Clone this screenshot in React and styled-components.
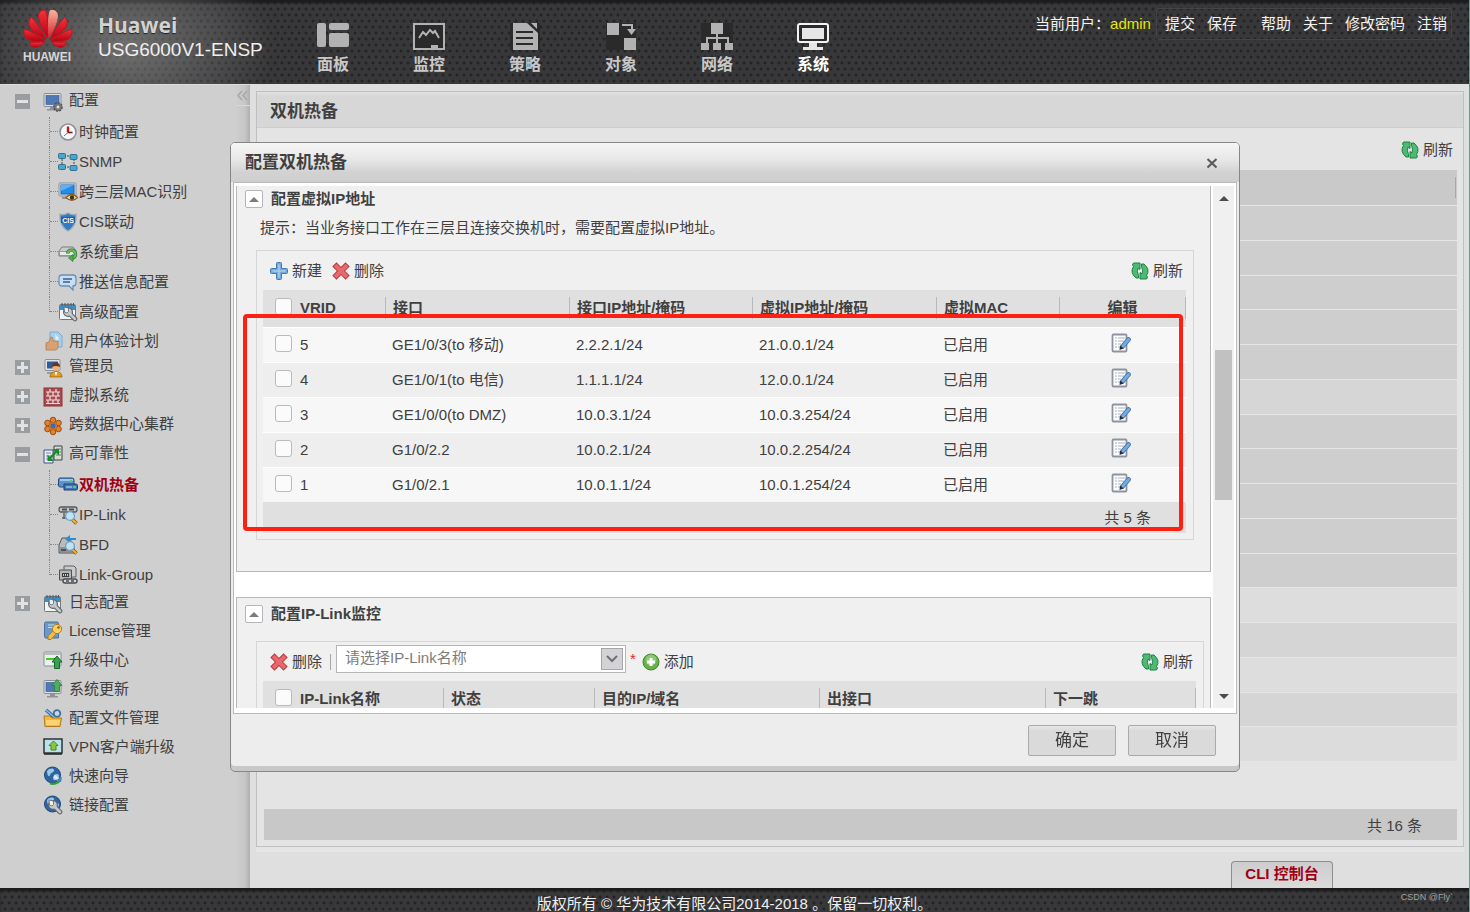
import React from "react";
import styled, { createGlobalStyle, css } from "styled-components";

const GlobalStyle = createGlobalStyle`
  *, *::before, *::after { box-sizing: border-box; }
  body {
    margin: 0;
    color: #404040;
    font: 15px/20px "Liberation Sans", "Noto Sans CJK SC", sans-serif;
  }
  button, select, input { font: inherit; color: inherit; }
  h1, h2, h3, p, ul { margin: 0; padding: 0; }
  ul { list-style: none; }
`;

const mesh = css`
  background-color: #38383a;
  background-image: radial-gradient(circle at 2px 3px, #242425 1px, transparent 2px),
    radial-gradient(circle at 5px 9px, #242425 1px, transparent 2px);
  background-size: 7px 12px;
`;

const Page = styled.div`
  display: flex;
  flex-direction: column;
  min-height: 100vh;
  border-right: 1px solid #25b3b5;
  background: #dfdfdf;
`;

/* ---------- header ---------- */

const Header = styled.header`
  ${mesh}
  display: flex;
  height: 84px;
  box-shadow: inset 0 3px 2px #1c1c1d, inset 0 -1px 0 #4a3032;
`;

const Brand = styled.div`
  display: flex;
  flex: none;
  width: 285px;
  padding: 9px 0 0 23px;
  gap: 25px;
  color: #efefef;
  background: radial-gradient(ellipse 150px 100px at 125px 46px, rgba(150, 150, 150, 0.6), transparent);
`;

const LogoBlock = styled.div`
  width: 50px;
  color: #d6d6d6;
  font-size: 12px;
  font-weight: bold;
  line-height: 16px;
  svg { display: block; }
`;

const BrandName = styled.div`
  font: bold 21px/24px "Open Sans", sans-serif;
  color: #d2d2d2;
  text-shadow: 0 1px 1px #222;
  padding-top: 4px;
`;

const Model = styled.div`
  font-size: 19px;
  line-height: 26px;
`;

const MainNav = styled.nav`
  display: flex;
  flex: 1;
`;

const NavLink = styled.a`
  display: flex;
  flex-direction: column;
  align-items: center;
  width: 96px;
  padding-top: 23px;
  gap: 4px;
  color: ${(p) => (p.$active ? "#ffffff" : "#c8c8c8")};
  font-size: 16px;
  font-weight: bold;
  line-height: 22px;
  text-decoration: none;
`;

const Account = styled.div`
  display: flex;
  align-items: flex-start;
  gap: 5px;
  padding: 8px 17px 0 0;
  color: #f2f2f2;
  line-height: 32px;
`;

const UserName = styled.span`
  color: #e6e600;
`;

const AccountLinks = styled.div`
  display: flex;
  gap: 12px;
  padding: 0 4px 0 8px;
  border: 1px solid #444446;
  border-radius: 3px;
  line-height: 30px;
`;

const AccountLink = styled.a`
  color: inherit;
  text-decoration: none;
  margin-left: ${(p) => (p.$apart ? "12px" : 0)};
`;

/* ---------- sidebar ---------- */

const Body = styled.div`
  display: flex;
  flex: 1;
`;

const Sidebar = styled.aside`
  display: flex;
  flex: none;
  width: 250px;
  border-top: 1px solid #dcdcdc;
  background: linear-gradient(to right, #cfcfcf 235px, #c6c6c6 245px, #afafaf);
`;

const Tree = styled.ul`
  flex: 1;
  padding-top: 2px;
`;

const TreeItem = styled.li`
  margin-top: ${(p) => (p.$tight ? "-2px" : 0)};
`;

const TreeRow = styled.div`
  display: flex;
  align-items: center;
  height: 29px;
  padding-left: 15px;
`;

const TreeLink = styled.a`
  display: flex;
  align-items: center;
  gap: ${(p) => (p.$child ? "1px" : "6px")};
  color: ${(p) => (p.$current ? "#a00014" : "#404040")};
  font-weight: ${(p) => (p.$current ? "bold" : "normal")};
  text-decoration: none;
  white-space: nowrap;
  svg { flex: none; }
`;

const TreeLabel = styled.span`
  padding-bottom: ${(p) => (p.$raised ? "4px" : 0)};
`;

const Toggle = styled.button`
  display: grid;
  place-items: center;
  width: 15px;
  height: 15px;
  margin-right: 13px;
  padding: 0;
  border: 0;
  background: #9a9da0;
`;

const ToggleSpace = styled.span`
  width: 28px;
`;

const ChildList = styled.ul`
  margin: 1px 0 -1px;
  padding-left: 49px;
`;

const Child = styled.li`
  display: flex;
  height: 30px;
`;

const Branch = styled.span`
  width: 9px;
  border-left: 1px dotted #858585;
  height: ${(p) => (p.$last ? "15px" : "30px")};
  &::before {
    content: "";
    display: block;
    height: 15px;
    border-bottom: 1px dotted #858585;
  }
`;

const Collapse = styled.button`
  flex: none;
  width: 14px;
  height: 21px;
  padding: 0;
  border: 0;
  border-bottom: 1px solid #d8d8d8;
  background: transparent;
  svg { display: block; }
`;

/* ---------- main panel ---------- */

const Main = styled.main`
  display: flex;
  flex: 1;
  flex-direction: column;
  padding: 7px 5px 0 6px;
`;

const PanelShell = styled.div`
  display: flex;
  flex: 1;
  padding-bottom: 5px;
  background: #e5e5e5;
`;

const Panel = styled.section`
  display: flex;
  flex: 1;
  flex-direction: column;
  border: 1px solid #bfbfbf;
  background: #e4e4e4;
`;

const PanelTitle = styled.h1`
  height: 36px;
  padding-left: 13px;
  border-bottom: 1px solid #cdcdcd;
  background: linear-gradient(#e2e2e2, #d7d7d7 4px);
  font-size: 17px;
  line-height: 40px;
`;

const PanelBody = styled.div`
  display: flex;
  flex: 1;
  flex-direction: column;
  padding: 0 6px 6px 7px;
`;

const PanelTools = styled.div`
  display: flex;
  justify-content: flex-end;
  align-items: center;
  height: 42px;
  padding: 2px 4px 0 0;
`;

const BackTable = styled.table`
  width: 100%;
  height: 591px;
  border-collapse: separate;
  border-spacing: 0;
`;

const BackHead = styled.th`
  height: 35px;
  padding: 7px 1px;
  background: #c9c9c9;
  div {
    height: 21px;
    border-right: 1px solid #a8a8a8;
  }
`;

const BackCell = styled.td`
  height: 34px;
  padding: 0;
  border-top: 1px solid #e6e6e6;
  background: ${(p) => p.$tone};
`;

const PanelCount = styled.div`
  margin-top: auto;
  padding-right: 35px;
  background: #c8c8c8;
  line-height: 34px;
  height: 31px;
  text-align: right;
`;

const ConsoleRow = styled.div`
  display: flex;
  justify-content: flex-end;
  padding: 9px 131px 0 0;
`;

const ConsoleTab = styled.button`
  width: 102px;
  height: 27px;
  padding: 0 0 2px;
  border: 1px solid #8e8e8e;
  border-bottom: 0;
  border-radius: 4px 4px 0 0;
  background: linear-gradient(#cdcdcd, #dadada);
  color: #a00014;
  font-weight: bold;
`;

const Footer = styled.footer`
  ${mesh}
  position: relative;
  height: 24px;
  padding-top: 4px;
  box-shadow: inset 0 3px 2px #1c1c1d;
  color: #f0f0f0;
  text-align: center;
  line-height: 24px;
  overflow: hidden;
`;

const Credit = styled.span`
  position: absolute;
  top: 0;
  right: 16px;
  color: #a2a2a2;
  font-size: 9px;
  line-height: 18px;
`;

/* ---------- dialog ---------- */

const Overlay = styled.div`
  position: fixed;
  inset: 0;
  display: grid;
  place-items: center;
  padding-top: 2px;
`;

const Dialog = styled.section`
  display: flex;
  flex-direction: column;
  width: min(1010px, 94vw);
  height: min(630px, 94vh);
  border: 1px solid #868686;
  border-radius: 5px;
  background: #ededed;
  box-shadow: inset 0 -5px 0 #c8c8c8;
  overflow: hidden;
`;

const DialogHead = styled.header`
  display: flex;
  flex: none;
  justify-content: space-between;
  align-items: center;
  height: 39px;
  padding: 0 19px 0 14px;
  background: linear-gradient(#f6f6f6, #e6e6e6 45%, #d2d2d2 75%, #cecece);
`;

const DialogTitle = styled.h2`
  font-size: 17px;
`;

const CloseButton = styled.button`
  width: 16px;
  height: 16px;
  padding: 0;
  border: 0;
  background: transparent;
  svg { display: block; }
`;

const Frame = styled.div`
  display: flex;
  flex: 1;
  min-height: 0;
  gap: 2px;
  margin: 0 2px;
  padding: 3px 2px 5px;
  border: 1px solid #b9b9bb;
  background: #ffffff;
`;

const Pane = styled.div`
  flex: 1;
  overflow: hidden;
`;

const ScrollTrack = styled.div`
  display: flex;
  flex: none;
  flex-direction: column;
  align-items: center;
  justify-content: space-between;
  width: 21px;
  background: #f0f0f0;
`;

const ScrollButton = styled.button`
  width: 21px;
  height: 23px;
  padding: 0;
  border: 0;
  background: transparent;
  svg { display: block; margin: 0 auto; }
`;

const ScrollThumb = styled.div`
  width: 17px;
  height: 150px;
  margin-bottom: 44px;
  background: #c1c1c1;
`;

const Section = styled.section`
  padding: ${(p) => (p.$clipped ? "4px 16px 31px 19px" : "7px 6px 31px 19px")};
  margin-bottom: 25px;
  border: 1px solid #b8b8bc;
  border-top-width: ${(p) => (p.$clipped ? 0 : "1px")};
  background: #f0f0f0;
`;

const SectionHead = styled.div`
  display: flex;
  align-items: center;
  gap: 8px;
  height: 18px;
  margin-left: -11px;
`;

const SectionToggle = styled.button`
  display: grid;
  place-items: center;
  width: 18px;
  height: 18px;
  padding: 0;
  border: 1px solid #b4b6bc;
  border-radius: 2px;
  background: #ffffff;
`;

const SectionTitle = styled.h3`
  font-size: 15px;
`;

const Hint = styled.p`
  margin-top: 10px;
  padding-left: 4px;
`;

const GridBox = styled.div`
  position: relative;
  margin-top: ${(p) => (p.$far ? "18px" : "12px")};
  padding: 0 7px 6px 6px;
  border: 1px solid #d6d6d6;
`;

const Toolbar = styled.div`
  display: flex;
  align-items: center;
  height: 39px;
  padding: 0 3px 0 7px;
  gap: ${(p) => (p.$dense ? "8px" : "10px")};
`;

const ToolButton = styled.button`
  display: flex;
  align-items: center;
  gap: 4px;
  padding: 0;
  border: 0;
  background: transparent;
  margin-left: ${(p) => (p.$end ? "auto" : 0)};
`;

const ToolDivider = styled.span`
  width: 1px;
  height: 16px;
  background: #a8a8a8;
`;

const SelectWrap = styled.div`
  display: grid;
  grid-template-columns: 1fr 25px;
  align-items: center;
  width: 290px;
  height: 28px;
  margin: 0 -4px 6px -3px;
`;

const Select = styled.select`
  grid-area: 1 / 1 / 2 / 3;
  height: 28px;
  padding: 0 30px 2px 8px;
  border: 1px solid #b5b5b9;
  border-radius: 0;
  background: #ffffff;
  color: #7c7c7c;
  appearance: none;
`;

const SelectArrow = styled.span`
  grid-area: 1 / 2 / 2 / 3;
  display: grid;
  place-items: center;
  width: 22px;
  height: 22px;
  border: 1px solid #a5a5ad;
  background: #d3d3d6;
  pointer-events: none;
`;

const Required = styled.span`
  color: #f02020;
  margin: 0 -2px 6px 0;
`;

const DataTable = styled.table`
  width: 100%;
  table-layout: fixed;
  border-collapse: separate;
  border-spacing: 0;
`;

const Col = styled.col`
  width: ${(p) => (p.$w ? p.$w + "px" : "auto")};
`;

const HeadCell = styled.th`
  height: 37px;
  padding: 7px 0 8px;
  background: #e0e0e0;
  text-align: ${(p) => (p.$center ? "center" : "left")};
  white-space: nowrap;
`;

const HeadLabel = styled.div`
  height: 22px;
  padding-left: ${(p) => (p.$flush ? 0 : "7px")};
  border-right: 1px solid #b9b9b9;
  line-height: 22px;
`;

const Row = styled.tr`
  height: 35px;
  background: ${(p) => (p.$odd ? "#eeeeee" : "#f7f7f7")};
`;

const Cell = styled.td`
  padding: 0 0 0 ${(p) => (p.$flush ? "0" : "6px")};
  border-top: 1px solid #ffffff;
  text-align: ${(p) => (p.$center ? "center" : "left")};
`;

const Check = styled.input`
  display: block;
  width: 17px;
  height: 17px;
  margin: 0 0 3px 12px;
  border: 1px solid #b8bac0;
  border-radius: 3px;
  background: #fbfbfb;
  appearance: none;
`;

const EditButton = styled.button`
  width: 20px;
  height: 20px;
  margin: 0 4px 4px 0;
  padding: 0;
  border: 0;
  background: transparent;
  vertical-align: middle;
  svg { display: block; }
`;

const CountCell = styled.td`
  height: 31px;
  padding: 0 35px 0 0;
  background: #e0e0e0;
  text-align: right;
`;

const Highlight = styled.div`
  position: absolute;
  inset: 63px 10px 8px -14px;
  border: 4px solid #ff2012;
  border-radius: 4px;
  pointer-events: none;
`;

const DialogFoot = styled.footer`
  display: flex;
  flex: none;
  justify-content: flex-end;
  gap: 12px;
  height: 57px;
  padding: 11px 23px 0 0;
`;

const DialogButton = styled.button`
  width: 88px;
  height: 31px;
  padding: 0;
  border: 1px solid #a9aaae;
  border-radius: 2px;
  background: linear-gradient(#e6e6e6, #dadada 5px);
  font-size: 17px;
`;

/* ---------- drawings ---------- */

const Petals = () => (
  <g>
    <path d="M24.2 29C24.8 20 25 8 22.8 1.8C19.5.3 15.5 2.5 15.5 6.8C15.5 13 20.5 22.5 24.2 29z" />
    <path d="M22.6 30.5C19 22 13.5 13 8.5 8.5C5.2 11 5.2 15 7.3 18.8C10.5 23.5 17.5 27.5 22.6 30.5z" />
    <path d="M21.8 32C16 27.5 8.5 22 1.5 20C0 24.5 1.8 29 6 30.8C10.5 32.7 17 32.3 21.8 32z" />
    <path d="M21.5 33.3C16 33 10.5 33 6.3 34C8 37.5 11 39 14 38.2C17 37.2 19.5 35.3 21.5 33.3z" />
  </g>
);

const HuaweiLogo = () => (
  <svg width="50" height="40" viewBox="0 0 50 40" aria-hidden="true">
    <defs>
      <linearGradient id="petal" x1="0" y1="0" x2="0" y2="1">
        <stop offset="0" stopColor="#f0333b" />
        <stop offset="1" stopColor="#b8000f" />
      </linearGradient>
      <linearGradient id="shine" x1="0" y1="0" x2="0" y2="1">
        <stop offset="0" stopColor="#f3b3a0" />
        <stop offset="1" stopColor="#d8202a" />
      </linearGradient>
    </defs>
    <g fill="url(#petal)" stroke="#c4101c" strokeWidth=".9"><Petals /></g>
    <g fill="url(#petal)" stroke="#c4101c" strokeWidth=".9" transform="translate(50 0) scale(-1 1)"><Petals /></g>
    <path fill="url(#shine)" stroke="url(#shine)" d="M25.8 29C25.2 20 25 8 27.2 1.8C30.5.3 34.5 2.5 34.5 6.8C34.5 13 29.5 22.5 25.8 29z" />
  </svg>
);

const navDrawings = {
  dashboard: (
    <g fill="#b2b2b2">
      <rect width="9" height="24" rx="2" /><rect x="12" width="20" height="7" rx="2" /><rect x="12" y="10" width="20" height="14" rx="2" />
    </g>
  ),
  monitor: (
    <>
      <rect x="1" y="1" width="30" height="25" fill="#2a2a2b" stroke="#b2b2b2" strokeWidth="2" />
      <path d="M6 15L10 9L13 12L17 7L20 10L22 8L26 15" fill="none" stroke="#b2b2b2" strokeWidth="2" />
      <path d="M18 22h7v3h-7z" fill="#b2b2b2" />
    </>
  ),
  policy: (
    <>
      <path d="M1 0h30v27H1z" fill="#2a2a2b" />
      <path d="M4 0h14l11 10v17H4z" fill="#b2b2b2" /><path d="M22 0h6v6z" fill="#b2b2b2" />
      <path d="M7 9h17M7 15h17M7 21h17" stroke="#2a2a2b" strokeWidth="2" />
    </>
  ),
  object: (
    <>
      <path d="M1 0h30v27H1z" fill="#2a2a2b" />
      <path d="M2 0h12v12H2zM19 15h12v12H19z" fill="#b2b2b2" />
      <path d="M17 2h10v6" fill="none" stroke="#b2b2b2" strokeWidth="2" /><path d="M22 6h9l-4.500 6z" fill="#b2b2b2" />
    </>
  ),
  network: (
    <>
      <path d="M0 0h32v27H0z" fill="#2a2a2b" />
      <path d="M10 0h12v11H10zM0 20h8v7H0zM12 20h8v7h-8zM24 20h8v7h-8z" fill="#b2b2b2" />
      <path d="M16 11v9M6 20v-5h21v5" fill="none" stroke="#b2b2b2" strokeWidth="2" />
    </>
  ),
  system: (
    <>
      <rect x="1" y="1" width="30" height="18" rx="2" fill="#2a2a2b" stroke="#f2f2f2" strokeWidth="2" />
      <path d="M5 5h22v11H5zM12 20h8v4h6v3H6v-3h6z" fill="#e6e6e6" />
    </>
  ),
};

const NavIcon = ({ name }) => (
  <svg width="32" height="27" viewBox="0 0 32 27" aria-hidden="true">{navDrawings[name]}</svg>
);

const screen = (
  <>
    <rect x="1" y="1.500" width="17" height="13" rx="1" fill="#d9dde2" stroke="#8b9097" />
    <rect x="3" y="3.500" width="13" height="9" fill="#4f78b5" stroke="#3a5c92" strokeWidth=".6" />
    <path d="M7 15h5v2h3v1.500H4V17h3z" fill="#8f9399" />
  </>
);
const wrench = (
  <>
    <path d="M11 11L17 17" stroke="#5f6469" strokeWidth="4.600" strokeLinecap="round" />
    <circle cx="10" cy="10" r="4.400" fill="#c3c8cc" stroke="#5f6469" strokeWidth="1.200" />
    <path d="M11 11L17 17" stroke="#c3c8cc" strokeWidth="2.600" strokeLinecap="round" />
    <path d="M6 5l4.500 1v3.500L9 11 6.500 10z" fill="#eef1f3" stroke="#5f6469" strokeWidth=".8" />
  </>
);
const calendar = (
  <>
    <rect x="1.500" y="2.500" width="16" height="15" rx="1" fill="#f2f5f7" stroke="#71777c" />
    <path d="M2 3h15v5H2z" fill="#3d8fca" />
    <path d="M4 1v3M7 1v3M10 1v3M13 1v3M15.500 1v3" stroke="#4f565c" />
    {wrench}
  </>
);
const lens = (
  <>
    <path d="M14 14l4.500 4.500" stroke="#7a5a10" strokeWidth="3.600" /><path d="M14 14l4.200 4.200" stroke="#f0b429" strokeWidth="2.200" />
    <circle cx="12" cy="11" r="4.400" fill="#bfe2f7" stroke="#6da0c4" strokeWidth="1.200" />
  </>
);
const greenUp = (
  <path d="M14 6l5 6h-2.500v6.500h-5V12H9z" fill="#35a34b" stroke="#146b2a" />
);
const globe = (
  <>
    <circle cx="9.500" cy="9" r="8" fill="#2f64a0" stroke="#204a7c" />
    <path d="M4 5c3-3 6-3 7-1s-3 2-4 5-3 0-3-4zM11 9c3-2 5-1 5 1s-3 5-5 4 0-3 0-5z" fill="#9cc7e8" />
  </>
);

const treeDrawings = {
  config: (
    <>
      {screen}
      <circle cx="15" cy="15" r="4" fill="#777" stroke="#4c4c4c" strokeWidth="1.600" strokeDasharray="2 1" />
      <circle cx="15" cy="15" r="3.400" fill="#777" /><circle cx="15" cy="15" r="1.500" fill="#e0e0e0" />
    </>
  ),
  clock: (
    <>
      <circle cx="10" cy="10" r="8" fill="#f5f7f9" stroke="#8a9299" strokeWidth="1.600" />
      <path d="M10 4.500v6" stroke="#c01818" strokeWidth="2.400" /><path d="M10 10.500h4.500" stroke="#7c1515" strokeWidth="1.600" /><path d="M6 14l4-3.500" stroke="#777" />
    </>
  ),
  snmp: (
    <>
      <path d="M6 4h8M6 15h8M4 4v12M16 4v12" stroke="#444" strokeDasharray="2 1" />
      <g fill="#49a8d2" stroke="#1e607f" strokeWidth=".8">
        <rect x="0.500" y="1.500" width="7" height="5" rx="1" /><rect x="12" y="2.500" width="7" height="5" rx="1" />
        <rect x="0.500" y="12.500" width="7" height="5" rx="1" /><rect x="12" y="13.500" width="7" height="5" rx="1" />
      </g>
    </>
  ),
  mac: (
    <>
      <rect x="1" y="1" width="17" height="13" rx="1" fill="#d9dde2" stroke="#8b9097" />
      <rect x="3" y="3" width="13" height="9" fill="#268be6" stroke="#1664b5" /><path d="M3 3h13l-13 6z" fill="#58b2f7" />
      <path d="M4 15h8v2H4z" fill="#8f9399" />
      <path d="M8 15.500q6-6 11.500 0q-5.500 5.500-11.500 0z" fill="#f5e6c4" stroke="#8a5a16" strokeWidth="1.300" /><circle cx="14" cy="15.500" r="2.200" fill="#43301a" />
    </>
  ),
  cis: (
    <>
      <path d="M10 1c3 2 6 2 8 1.500C18.500 11 15 16 10 19C5 16 1.500 11 2 2.500C4 3 7 3 10 1z" fill="#2d7cc4" stroke="#9ba6b0" strokeWidth="1.400" />
      <path d="M3 5h14v6H3z" fill="#1d62a6" />
      <text x="10" y="10.500" textAnchor="middle" fontSize="7" fontWeight="bold" fill="#fff" fontFamily="Liberation Sans, sans-serif">CIS</text>
    </>
  ),
  reboot: (
    <>
      <path d="M4 5h11l3 4v5H1V9z" fill="#c9cccf" stroke="#777d82" /><path d="M1.500 9.500h16v4h-16z" fill="#e7e9ea" stroke="#858a8e" strokeWidth=".8" />
      <path d="M9.500 11.500a4 4 0 1 1 5 4.500" fill="none" stroke="#2d7c2a" strokeWidth="3.400" /><path d="M9.500 11.500a4 4 0 1 1 5 4.500" fill="none" stroke="#6cba5c" strokeWidth="2" />
      <path d="M15 12.500v7l-4.500-3.500z" fill="#58ad4b" stroke="#2d7c2a" strokeWidth=".7" />
    </>
  ),
  message: (
    <>
      <path d="M4 3h11q3 0 3 3v5q0 3-3 3v4l-4-4H4q-3 0-3-3V6q0-3 3-3z" fill="#c4dff5" stroke="#6e8fae" strokeWidth="1.300" />
      <path d="M5 7h9M5 10h7" stroke="#3f5f86" strokeWidth="1.400" />
    </>
  ),
  calendar,
  thumb: (
    <>
      <path d="M7 1h8l4 4v11H7z" fill="#a9cfee" stroke="#7da9cf" /><path d="M12 3l4 4-3 5z" fill="#d9edfb" />
      <path d="M3 12l3-1 2-5q2 0 2 2v2h5q1 1 0 2v5q-1 2-3 2H3z" fill="#d8a173" stroke="#b57a49" strokeWidth=".8" />
    </>
  ),
  admin: (
    <>
      <rect x="2" y="1.500" width="15" height="11" rx="1" fill="#e2e4e6" stroke="#8b9097" /><rect x="4" y="3.500" width="11" height="7" fill="#2c5c9a" />
      <path d="M4 14h6v2H4z" fill="#9a9ea2" />
      <circle cx="13" cy="9.500" r="3.600" fill="#efb27c" /><path d="M9 9q0-4.500 4-4.500T17 9q-4-2-8 0z" fill="#6b3712" />
      <path d="M7 19q0-5 6-5.500q6 .5 6 5.500z" fill="#e79b1e" stroke="#8f5c0a" strokeWidth=".7" /><path d="M11.500 14h3L13 18z" fill="#fff" />
    </>
  ),
  wall: (
    <>
      <rect x="1" y="1" width="18" height="18" fill="#a84b4e" stroke="#8c3438" />
      <path d="M3 5h14M3 9h14M3 13h14M3 16.500h14M7 2v3M13 2v3M5 5v4M10 5v4M15 5v4M7 9v4M13 9v4M5 13v4M10 13v4M15 13v4" stroke="#f0dede" strokeWidth="1.200" />
    </>
  ),
  cluster: (
    <>
      <g fill="#e5812a" stroke="#8e4410" strokeWidth=".9">
        <circle cx="10" cy="4" r="2.800" /><circle cx="10" cy="16" r="2.800" /><circle cx="4.500" cy="7" r="2.800" /><circle cx="15.500" cy="7" r="2.800" /><circle cx="4.500" cy="13" r="2.800" /><circle cx="15.500" cy="13" r="2.800" />
      </g>
      <circle cx="10" cy="10" r="3.800" fill="#d07122" /><circle cx="10" cy="10" r="2.400" fill="#2a6fc9" />
    </>
  ),
  reliability: (
    <>
      <path d="M1 5h9v13H1z" fill="#e9edf5" stroke="#4a4f8a" /><path d="M3 8h5M3 11h5M3 14h5" stroke="#8085b0" />
      <path d="M11 1h8v14h-8z" fill="#d5dbd7" stroke="#3d4440" /><path d="M13 4h5M13 7h5M13 10h5" stroke="#6d7771" />
      <path d="M6 14l8-8" fill="none" stroke="#1d8a2b" strokeWidth="2.400" /><path d="M9.500 4H16v6.500zM4.500 9.500V16H11z" fill="#1d8a2b" />
    </>
  ),
  standby: (
    <>
      <path d="M2 3h12q2 0 2 2v5q0 2-2 2H2q-1.500 0-1.500-2V5q0-2 1.500-2z" fill="#5b93cd" stroke="#24497e" /><path d="M2 5h13" stroke="#b9d8f3" strokeWidth="1.500" />
      <path d="M6 9h12q1.500 0 1.500 1.500v3q0 1.500-1.500 1.500H6z" fill="#3f77b8" stroke="#1f3f70" /><path d="M8 12h6" stroke="#cfe4f7" /><path d="M12 6h2M15 12h3" stroke="#54d646" strokeWidth="2" />
    </>
  ),
  iplink: (
    <>
      <path d="M3 2h14q2 0 2 2.500T17 7H3Q1 7 1 4.500T3 2z" fill="#c4c6c8" stroke="#55595c" strokeWidth="1.300" /><path d="M4 4.500h5M11 4.500h5" stroke="#4d5154" strokeWidth="2" /><path d="M6 8v6M4 13h5" stroke="#666" strokeWidth="1.500" />
      {lens}
    </>
  ),
  bfd: (
    <>
      <path d="M4 3h7l5 7v8H1v-8z" fill="#b9bcbe" stroke="#52575a" /><path d="M2 12h12v5H2z" fill="#8d9194" /><path d="M3 15h5" stroke="#3b3f41" strokeWidth="1.500" />
      <path d="M18 5h-6V8L7 4l5-4v3h6z" fill="#2d8bd0" />{lens}
    </>
  ),
  linkgroup: (
    <>
      <path d="M6 1h10l2 2v9H6z" fill="#c9cbcd" stroke="#5a5e61" /><path d="M1.500 5h12v10h-12z" fill="#b2b5b7" stroke="#4d5154" /><path d="M4 8h7v4H4z" fill="#3b3f41" /><path d="M5 10h5" stroke="#e8cf4c" strokeWidth="2" strokeDasharray="1 1" />
      <path d="M7 14h10q2 0 2 2t-2 2H7q-2 0-2-2t2-2z" fill="#d8d9da" stroke="#484c4f" strokeWidth="1.400" /><path d="M8 16h3M13 16h3" stroke="#484c4f" strokeWidth="1.400" />
    </>
  ),
  license: (
    <>
      <path d="M3 1h11q1.500 0 1.500 1.500V17H3q-1.500 0-1.500-1.500v-13Q1.500 1 3 1z" fill="#6d98c6" stroke="#4a719c" /><path d="M5 4h8M5 6.500h6" stroke="#c4dbf0" />
      <path d="M10.500 9.500L5 15v3.500h3l5-5.500" fill="#f3bd45" stroke="#b37c14" /><circle cx="14" cy="8" r="4.600" fill="#f9cf66" stroke="#b37c14" /><circle cx="15.500" cy="6.500" r="1.300" fill="#8d6417" />
    </>
  ),
  upgrade: (
    <>
      <rect x="1" y="2" width="17" height="14" rx="1" fill="#eef0f0" stroke="#888d8f" /><path d="M1 2.500h17v2.500H1z" fill="#b8bdbf" /><path d="M3 9h8" stroke="#3bd321" strokeWidth="2" /><path d="M11 9h5" stroke="#333" strokeWidth="2" />{greenUp}
    </>
  ),
  update: (
    <>
      {screen}
      <path d="M14 0.500l5 6h-2.500v6h-5v-6H9z" fill="#4fae5c" stroke="#2b7d3a" strokeWidth=".8" />
    </>
  ),
  files: (
    <>
      <path d="M3 2l8 7" stroke="#2e6aa8" strokeWidth="3.400" /><path d="M3 2l8 7" stroke="#8cbbe4" strokeWidth="1.500" /><circle cx="14" cy="5.500" r="3.300" fill="#c5d6e6" stroke="#446e97" strokeWidth="1.800" />
      <path d="M1 8h6l2 2h9.500L17 18.500H2z" fill="#f4b83c" stroke="#b67c12" /><path d="M3 12h14l-1 5H3z" fill="#fbd375" />
    </>
  ),
  vpn: (
    <>
      <rect x="1" y="2" width="18" height="14" fill="#b9e3ea" stroke="#2d3436" strokeWidth="1.500" /><path d="M1 17h18" stroke="#222" strokeWidth="1.500" />
      <path d="M10.500 4l4.500 4.500h-2V13H8V8.500H6z" fill="#8cc63e" stroke="#4c8616" />
    </>
  ),
  wizard: (
    <>
      {globe}
      <path d="M11 10l5 4" stroke="#dce8f2" strokeWidth="3" /><path d="M7 17.500q7 1.500 10-3" fill="none" stroke="#2da12d" strokeWidth="2" /><path d="M13 14l6-3-1 5z" fill="#3f7fc0" />
    </>
  ),
  link: (<>{globe}{wrench}</>),
};

const TreeIcon = ({ name }) => (
  <svg width="20" height="20" viewBox="0 0 20 20" aria-hidden="true">{treeDrawings[name]}</svg>
);

const RefreshIcon = () => (
  <svg width="18" height="18" viewBox="0 0 18 18" aria-hidden="true">
    <g fill="#4dbb73" stroke="#1d8045" strokeLinejoin="round">
      <path d="M2.500 1H9v6.500L7 6Q5.500 9.500 7.500 13.500V16H5Q-1.500 10.500 2.500 4.500L1.500 3z" />
      <path d="M15.500 17H9v-6.500l2 1.500Q12.500 8.500 10.500 4.500V2H13Q19.500 7.500 15.500 13.500l1 1.500z" />
    </g>
  </svg>
);

const PlusIcon = () => (
  <svg width="18" height="18" viewBox="0 0 18 18" aria-hidden="true">
    <path d="M6.500 1.500q0-1 1-1h3q1 0 1 1v5h5q1 0 1 1v3q0 1-1 1h-5v5q0 1-1 1h-3q-1 0-1-1v-5h-5q-1 0-1-1v-3q0-1 1-1h5z" fill="#77aadb" stroke="#4379b3" />
    <path d="M9 2.500v13M2.500 9h13" stroke="#a9cdec" strokeWidth="1.500" />
  </svg>
);

const DeleteIcon = () => (
  <svg width="18" height="18" viewBox="0 0 18 18" aria-hidden="true">
    <path d="M4.500 4.500l9 9M13.500 4.500l-9 9" stroke="#b73a3f" strokeWidth="6" strokeLinecap="square" />
    <path d="M4.500 4.500l9 9M13.500 4.500l-9 9" stroke="#e8696b" strokeWidth="4" strokeLinecap="square" />
  </svg>
);

const AddIcon = () => (
  <svg width="18" height="18" viewBox="0 0 18 18" aria-hidden="true">
    <circle cx="9" cy="9" r="8" fill="#69b04b" stroke="#458a2d" /><circle cx="9" cy="7" r="5.500" fill="#8cc972" />
    <path d="M9 5v8M5 9h8" stroke="#fff" strokeWidth="3" />
  </svg>
);

const EditIcon = () => (
  <svg width="20" height="20" viewBox="0 0 20 20" aria-hidden="true">
    <rect x="1.500" y="1.500" width="14" height="17" rx="1" fill="#fdfdfd" stroke="#8d94a0" strokeWidth="1.800" />
    <path d="M4 5h2M7 5h7M4 8h2M7 8h6M4 11h2M7 11h3M4 14h2M7 14h2" stroke="#a9b2bf" />
    <path d="M17.500 6.500L11.500 13.500" stroke="#3e6fa8" strokeWidth="4.600" strokeLinecap="round" />
    <path d="M17.500 6.500L12 13" stroke="#77aadd" strokeWidth="3" strokeLinecap="round" />
    <path d="M9 12.500l3.500 3-4 1.500z" fill="#262b33" />
  </svg>
);

const Triangle = ({ down, color }) => (
  <svg width="10" height="6" viewBox="0 0 10 6" aria-hidden="true">
    <path d={down ? "M0 0h10L5 5z" : "M0 6h10L5 1z"} fill={color} />
  </svg>
);

/* ---------- data ---------- */

const navItems = [
  ["dashboard", "面板"], ["monitor", "监控"], ["policy", "策略"],
  ["object", "对象"], ["network", "网络"], ["system", "系统"],
];

const tree = [
  {
    icon: "config", label: "配置", kind: "open",
    children: [
      ["clock", "时钟配置"], ["snmp", "SNMP"], ["mac", "跨三层MAC识别"], ["cis", "CIS联动"],
      ["reboot", "系统重启"], ["message", "推送信息配置"], ["calendar", "高级配置"],
    ],
  },
  { icon: "thumb", label: "用户体验计划" },
  { icon: "admin", label: "管理员", kind: "closed", tight: true },
  { icon: "wall", label: "虚拟系统", kind: "closed" },
  { icon: "cluster", label: "跨数据中心集群", kind: "closed" },
  {
    icon: "reliability", label: "高可靠性", kind: "open",
    children: [["standby", "双机热备"], ["iplink", "IP-Link"], ["bfd", "BFD"], ["linkgroup", "Link-Group"]],
  },
  { icon: "calendar", label: "日志配置", kind: "closed" },
  { icon: "license", label: "License管理", tight: true },
  { icon: "upgrade", label: "升级中心" },
  { icon: "update", label: "系统更新" },
  { icon: "files", label: "配置文件管理" },
  { icon: "vpn", label: "VPN客户端升级" },
  { icon: "wizard", label: "快速向导" },
  { icon: "link", label: "链接配置" },
];

const current = "双机热备";

const rows = [
  ["5", "GE1/0/3(to 移动)", "2.2.2.1/24", "21.0.0.1/24"],
  ["4", "GE1/0/1(to 电信)", "1.1.1.1/24", "12.0.0.1/24"],
  ["3", "GE1/0/0(to DMZ)", "10.0.3.1/24", "10.0.3.254/24"],
  ["2", "G1/0/2.2", "10.0.2.1/24", "10.0.2.254/24"],
  ["1", "G1/0/2.1", "10.0.1.1/24", "10.0.1.254/24"],
];

const tones = [
  "#cecece", "#cecece", "#cecece", "#cecece", "#cecece", "#d6d6d6", "#cecece", "#cecece",
  "#cecece", "#cecece", "#cecece", "#dddddd", "#d5d5d5", "#dddddd", "#d5d5d5", "#dcdcdc",
];

/* ---------- parts ---------- */

const SideTree = () => (
  <Tree>
    {tree.map((item) => (
      <TreeItem key={item.label} $tight={item.tight}>
        <TreeRow>
          {item.kind ? (
            <Toggle aria-label={item.label}>
              <svg width="11" height="11" aria-hidden="true">
                <path d={item.kind === "open" ? "M0 5.500h11" : "M0 5.500h11M5.500 0v11"} stroke="#e2e2e2" strokeWidth="3" />
              </svg>
            </Toggle>
          ) : <ToggleSpace />}
          <TreeLink href="#">
            <TreeIcon name={item.icon} />
            <TreeLabel $raised={!!item.kind}>{item.label}</TreeLabel>
          </TreeLink>
        </TreeRow>
        {item.children && (
          <ChildList>
            {item.children.map(([icon, label], i) => (
              <Child key={label}>
                <Branch $last={i === item.children.length - 1} />
                <TreeLink href="#" $child $current={label === current}>
                  <TreeIcon name={icon} />
                  <TreeLabel>{label}</TreeLabel>
                </TreeLink>
              </Child>
            ))}
          </ChildList>
        )}
      </TreeItem>
    ))}
  </Tree>
);

const Refresh = () => (
  <ToolButton $end><RefreshIcon />刷新</ToolButton>
);

const VirtualIpSection = () => (
  <Section $clipped>
    <SectionHead>
      <SectionToggle aria-label="配置虚拟IP地址"><Triangle color="#7b7b7b" /></SectionToggle>
      <SectionTitle>配置虚拟IP地址</SectionTitle>
    </SectionHead>
    <Hint>提示：当业务接口工作在三层且连接交换机时，需要配置虚拟IP地址。</Hint>
    <GridBox>
      <Toolbar>
        <ToolButton><PlusIcon />新建</ToolButton>
        <ToolButton><DeleteIcon />删除</ToolButton>
        <Refresh />
      </Toolbar>
      <DataTable>
        <colgroup>
          <Col $w={37} /><Col $w={86} /><Col $w={184} /><Col $w={183} /><Col $w={184} /><Col $w={123} /><Col />
        </colgroup>
        <thead>
          <tr>
            <HeadCell><Check type="checkbox" aria-label="VRID" /></HeadCell>
            <HeadCell><HeadLabel $flush>VRID</HeadLabel></HeadCell>
            {["接口", "接口IP地址/掩码", "虚拟IP地址/掩码", "虚拟MAC"].map((t) => (
              <HeadCell key={t}><HeadLabel>{t}</HeadLabel></HeadCell>
            ))}
            <HeadCell $center><HeadLabel $flush>编辑</HeadLabel></HeadCell>
          </tr>
        </thead>
        <tbody>
          {rows.map(([id, port, ip, vip], i) => (
            <Row key={id} $odd={i % 2 === 1}>
              <Cell $flush><Check type="checkbox" aria-label={id} /></Cell>
              <Cell $flush>{id}</Cell>
              <Cell>{port}</Cell>
              <Cell>{ip}</Cell>
              <Cell>{vip}</Cell>
              <Cell>已启用</Cell>
              <Cell $flush $center><EditButton aria-label="编辑"><EditIcon /></EditButton></Cell>
            </Row>
          ))}
        </tbody>
        <tfoot>
          <tr><CountCell colSpan={7}>共 5 条</CountCell></tr>
        </tfoot>
      </DataTable>
      <Highlight />
    </GridBox>
  </Section>
);

const IpLinkSection = () => (
  <Section>
    <SectionHead>
      <SectionToggle aria-label="配置IP-Link监控"><Triangle color="#7b7b7b" /></SectionToggle>
      <SectionTitle>配置IP-Link监控</SectionTitle>
    </SectionHead>
    <GridBox $far>
      <Toolbar $dense>
        <ToolButton><DeleteIcon />删除</ToolButton>
        <ToolDivider />
        <SelectWrap>
          <Select aria-label="IP-Link名称" defaultValue="">
            <option value="">请选择IP-Link名称</option>
          </Select>
          <SelectArrow>
            <svg width="12" height="8" aria-hidden="true"><path d="M1 1l5 5 5-5" fill="none" stroke="#707075" strokeWidth="2" /></svg>
          </SelectArrow>
        </SelectWrap>
        <Required>*</Required>
        <ToolButton><AddIcon />添加</ToolButton>
        <Refresh />
      </Toolbar>
      <DataTable>
        <colgroup>
          <Col $w={37} /><Col $w={144} /><Col $w={151} /><Col $w={225} /><Col $w={226} /><Col />
        </colgroup>
        <thead>
          <tr>
            <HeadCell><Check type="checkbox" aria-label="IP-Link名称" /></HeadCell>
            <HeadCell><HeadLabel $flush>IP-Link名称</HeadLabel></HeadCell>
            {["状态", "目的IP/域名", "出接口", "下一跳"].map((t) => (
              <HeadCell key={t}><HeadLabel>{t}</HeadLabel></HeadCell>
            ))}
          </tr>
        </thead>
      </DataTable>
    </GridBox>
  </Section>
);

export default function App() {
  return (
    <>
      <GlobalStyle />
      <Page>
        <Header>
          <Brand>
            <LogoBlock><HuaweiLogo />HUAWEI</LogoBlock>
            <div>
              <BrandName>Huawei</BrandName>
              <Model>USG6000V1-ENSP</Model>
            </div>
          </Brand>
          <MainNav>
            {navItems.map(([icon, label]) => (
              <NavLink key={icon} href="#" $active={icon === "system"}>
                <NavIcon name={icon} />
                {label}
              </NavLink>
            ))}
          </MainNav>
          <Account>
            <span>当前用户：<UserName>admin</UserName></span>
            <AccountLinks>
              {["提交", "保存", "帮助", "关于", "修改密码", "注销"].map((t) => (
                <AccountLink key={t} href="#" $apart={t === "帮助"}>{t}</AccountLink>
              ))}
            </AccountLinks>
          </Account>
        </Header>
        <Body>
          <Sidebar>
            <SideTree />
            <Collapse aria-label="收起">
              <svg width="14" height="20" aria-hidden="true">
                <path d="M6 6L2 10.500 6 15M11 6L7 10.500 11 15" fill="none" stroke="#a8a8a8" strokeWidth="1.500" />
              </svg>
            </Collapse>
          </Sidebar>
          <Main>
            <PanelShell>
              <Panel>
                <PanelTitle>双机热备</PanelTitle>
                <PanelBody>
                  <PanelTools><Refresh /></PanelTools>
                  <BackTable>
                    <thead><tr><BackHead><div /></BackHead></tr></thead>
                    <tbody>
                      {tones.map((tone, i) => (
                        <tr key={i}><BackCell $tone={tone} /></tr>
                      ))}
                    </tbody>
                  </BackTable>
                  <PanelCount>共 16 条</PanelCount>
                </PanelBody>
              </Panel>
            </PanelShell>
            <ConsoleRow><ConsoleTab>CLI 控制台</ConsoleTab></ConsoleRow>
          </Main>
        </Body>
        <Footer>
          版权所有 © 华为技术有限公司2014-2018 。保留一切权利。
          <Credit>CSDN @Fly`</Credit>
        </Footer>
      </Page>
      <Overlay>
        <Dialog role="dialog" aria-label="配置双机热备">
          <DialogHead>
            <DialogTitle>配置双机热备</DialogTitle>
            <CloseButton aria-label="关闭">
              <svg width="16" height="16" aria-hidden="true">
                <path d="M3.500 4l9 8.500M12.500 4l-9 8.500" stroke="#5c5c5c" strokeWidth="2.200" />
              </svg>
            </CloseButton>
          </DialogHead>
          <Frame>
            <Pane>
              <VirtualIpSection />
              <IpLinkSection />
            </Pane>
            <ScrollTrack>
              <ScrollButton aria-label="向上"><Triangle color="#4c4c4c" /></ScrollButton>
              <ScrollThumb />
              <ScrollButton aria-label="向下"><Triangle down color="#4c4c4c" /></ScrollButton>
            </ScrollTrack>
          </Frame>
          <DialogFoot>
            <DialogButton>确定</DialogButton>
            <DialogButton>取消</DialogButton>
          </DialogFoot>
        </Dialog>
      </Overlay>
    </>
  );
}
